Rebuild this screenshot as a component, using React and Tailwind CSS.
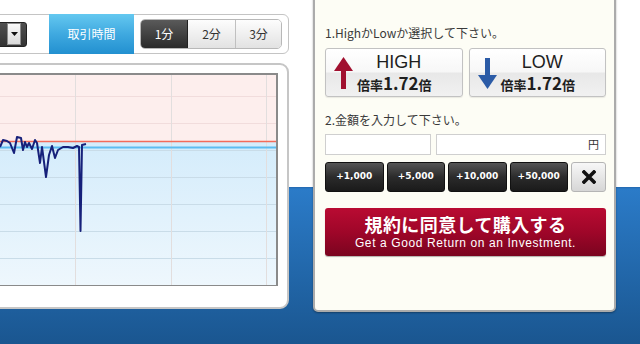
const JP = "font-['Noto_Sans_CJK_JP','Liberation_Sans',sans-serif]";

const LINE = [
  [0, 147], [3, 140], [7, 141], [10, 143], [14, 153], [17, 137], [21, 138], [23, 150],
  [25, 142], [27, 147], [29, 143], [32, 149], [35, 140], [37, 143], [40, 163], [42, 147],
  [46, 177], [49, 155], [52, 146], [55, 158], [58, 150], [63, 147], [68, 147], [73, 148],
  [77, 146], [79, 147], [80.5, 231], [82, 145], [86, 144],
];

function Chart() {
  const hLines = [21, 48, 75, 102, 129, 156, 183];
  const vLines = [75, 171, 266];
  const d = LINE.map(([x, y], i) => `${i ? 'L' : 'M'}${x} ${y - 75}`).join(' ');
  return (
    <svg width="276" height="210" viewBox="0 0 276 210" className="block">
      <defs>
        <linearGradient id="blueArea" x1="0" y1="0" x2="0" y2="1">
          <stop offset="0" stopColor="#d4ecfb" />
          <stop offset="1" stopColor="#eef7fd" />
        </linearGradient>
      </defs>
      <rect x="0" y="0" width="276" height="67" fill="#fdeeed" />
      <rect x="0" y="67" width="276" height="143" fill="url(#blueArea)" />
      {hLines.map(y => (
        <line key={y} x1="0" x2="276" y1={y + 0.5} y2={y + 0.5} stroke={y < 66 ? '#f1dcdc' : '#c9dce8'} strokeWidth="1" />
      ))}
      {vLines.map(x => (
        <line key={x} x1={x + 0.5} x2={x + 0.5} y1="0" y2="210" stroke="#e2dede" strokeWidth="1" />
      ))}
      <line x1="0" x2="276" y1="66.5" y2="66.5" stroke="#f36b5a" strokeWidth="1.5" />
      <line x1="0" x2="276" y1="72.5" y2="72.5" stroke="#5cbcf0" strokeWidth="2" />
      <path d={d} fill="none" stroke="#16207a" strokeWidth="2" strokeLinejoin="round" />
    </svg>
  );
}

function ArrowUp() {
  return (
    <svg width="19" height="32" viewBox="0 0 19 32" className="shrink-0">
      <polygon points="9.5,0 19,14 0,14" fill="#a1102f" />
      <rect x="7" y="13" width="5" height="19" fill="#a1102f" />
    </svg>
  );
}

function ArrowDown() {
  return (
    <svg width="19" height="31" viewBox="0 0 19 31" className="shrink-0">
      <rect x="7" y="0" width="5" height="19" fill="#2b5ba6" />
      <polygon points="0,17 19,17 9.5,31" fill="#2b5ba6" />
    </svg>
  );
}

function DirButton({ label, arrow }) {
  return (
    <div className="flex-1 flex items-center pl-[8px] pt-[1px] rounded-[3px] border border-[#c2c2c2] bg-[linear-gradient(#ffffff,#f7f7f7_48%,#e8e8e8_52%,#f1f1f1)] shadow-[0_1px_1px_rgba(0,0,0,0.08)]">
      {arrow}
      <div className="flex-1 flex flex-col items-center pr-[26px] text-[#1e1e1e]">
        <div className="pl-[9px] font-['Liberation_Sans',sans-serif] text-[18px] leading-[22px]">{label}</div>
        <div className={`${JP} font-bold leading-[20px] flex items-baseline`}>
          <span className="text-[13px]">倍率</span>
          <span className="text-[17px]">1.72</span>
          <span className="text-[13px]">倍</span>
        </div>
      </div>
    </div>
  );
}

const AMOUNTS = ['+1,000', '+5,000', '+10,000', '+50,000'];

export default function App() {
  return (
    <div className={`w-[640px] h-[344px] overflow-hidden ${JP} bg-[linear-gradient(to_bottom,#ffffff_0px,#ffffff_187px,#2367ad_187px,#2b7bc8_189px,#1a5690_344px)]`}>
      <div className="flex items-start">
        {/* left column */}
        <div className="-ml-[20px] w-[309px] mt-[14px] flex flex-col">
          <div className="h-[40px] flex items-center pl-[7px] rounded-r-[6px] border border-[#c4c4c4] bg-white">
            <div className="w-[39px] h-[25px] flex items-center justify-end pr-[5px] rounded-[3px] border border-[#222] bg-[linear-gradient(#505050,#333333)]">
              <div className="w-[14px] h-[22px] flex items-center justify-center border border-[#8c8c8c] bg-[linear-gradient(#fafafa,#d9d9d9)]">
                <svg width="7" height="4" viewBox="0 0 7 4"><polygon points="0,0 7,0 3.5,4" fill="#111" /></svg>
              </div>
            </div>
            <div className="ml-[22px] w-[85px] self-stretch -my-[1px] flex items-center justify-center text-white text-[12px] bg-[linear-gradient(#64c8f0,#3fa9e0_50%,#2290d0)]">
              取引時間
            </div>
            <div className="ml-[6px] w-[142px] h-[30px] flex rounded-[5px] border border-[#b8b8b8] overflow-hidden text-[12px]">
              <div className="w-[47px] flex items-center justify-center text-white bg-[linear-gradient(#5a5a5a,#2a2a2a)] border-r border-[#222]">1分</div>
              <div className="w-[48px] flex items-center justify-center text-[#333] bg-[linear-gradient(#fdfdfd,#e2e2e2)] border-r border-[#c0c0c0]">2分</div>
              <div className="flex-1 flex items-center justify-center text-[#333] bg-[linear-gradient(#fdfdfd,#e2e2e2)]">3分</div>
            </div>
          </div>

          <div className="mt-[9px] h-[246px] pl-[18px] pr-[9px] pt-[8px] rounded-r-[9px] border-2 border-[#c6c6c6] bg-white">
            <div className="w-[278px] h-[213px] border-t-2 border-r-2 border-b border-[#8a8a8a]">
              <Chart />
            </div>
          </div>
        </div>

        {/* right panel */}
        <div className="ml-[24px] -mt-[10px] w-[303px] h-[322px] flex flex-col pl-[10px] pr-[8px] pt-[33px] rounded-b-[5px] border-2 border-[#ababab] bg-[#fdfdf5] shadow-[0_1px_2px_rgba(0,0,0,0.35)]">
          <div className="text-[12px] leading-[16px] text-[#3a3a3a]">1.HighかLowか選択して下さい。</div>
          <div className="mt-[7px] h-[49px] flex gap-[6px]">
            <DirButton label="HIGH" arrow={<ArrowUp />} />
            <DirButton label="LOW" arrow={<ArrowDown />} />
          </div>

          <div className="mt-[15px] text-[12px] leading-[16px] text-[#3a3a3a]">2.金額を入力して下さい。</div>
          <div className="mt-[6px] h-[21px] flex gap-[5px]">
            <div className="w-[106px] border border-[#cfcfcf] bg-white" />
            <div className="flex-1 flex items-center justify-end pr-[6px] border border-[#cfcfcf] bg-white text-[11px] text-[#333]">円</div>
          </div>

          <div className="mt-[7px] h-[30px] flex gap-[3px]">
            {AMOUNTS.map(a => (
              <div key={a} className="w-[58.5px] flex items-center justify-center rounded-[3px] border border-[#111] bg-[linear-gradient(#555555,#2b2b2b_50%,#1a1a1a)] text-white font-['DejaVu_Sans',sans-serif] font-bold text-[9px]">
                {a}
              </div>
            ))}
            <div className="flex-1 flex items-center justify-center rounded-[3px] border border-[#b5b5b5] bg-[linear-gradient(#f7f7f7,#d6d6d6)]">
              <svg width="14" height="14" viewBox="0 0 14 14">
                <path d="M2 2 L12 12 M12 2 L2 12" stroke="#111" strokeWidth="3.6" strokeLinecap="square" />
              </svg>
            </div>
          </div>

          <div className="mt-[16px] h-[48px] flex flex-col items-center justify-center rounded-[3px] bg-[linear-gradient(#b90b32,#9f0629_50%,#7a041f)] text-white shadow-[0_1px_1px_rgba(0,0,0,0.3)]">
            <div className="text-[18px] font-bold leading-[22px] tracking-[0.4px]">規約に同意して購入する</div>
            <div className="font-['Liberation_Sans',sans-serif] text-[12px] leading-[16px] tracking-[0.6px]">Get a Good Return on an Investment.</div>
          </div>
        </div>
      </div>
    </div>
  );
}
